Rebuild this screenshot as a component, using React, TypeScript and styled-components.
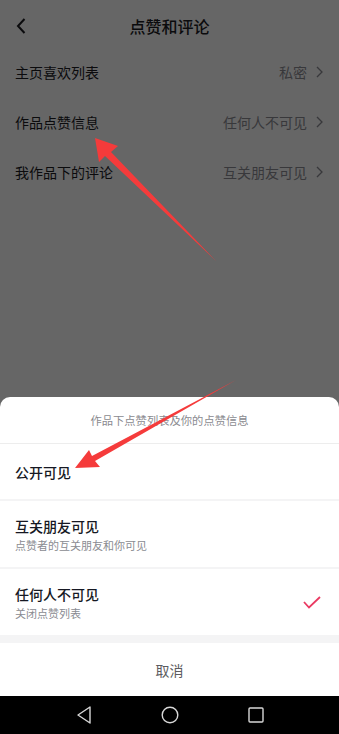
import styled, { createGlobalStyle } from 'styled-components';

const GlobalStyle = createGlobalStyle`
    html, body {
        margin: 0;
        padding: 0;
        background: #ffffff;
    }
    body {
        font-family: "Noto Sans CJK SC", "Noto Sans", sans-serif;
    }
`;

const Screen = styled.div`
    width: 339px;
    height: 734px;
    position: relative;
    display: flex;
    flex-direction: column;
    overflow: hidden;
    background: #666666;
`;

const Page = styled.div`
    flex: 1;
    display: flex;
    flex-direction: column;
    background: #666666;
`;

const Header = styled.div`
    height: 42px;
    padding-top: 5px;
    display: flex;
    align-items: center;
    justify-content: center;
    position: relative;
    font-size: 16px;
    font-weight: 500;
    color: #0b0b0d;
`;

const Back = styled.svg`
    position: absolute;
    left: 16px;
    top: 18px;
`;

const SettingRow = styled.div`
    height: 50px;
    display: flex;
    align-items: center;
    justify-content: space-between;
    padding: 0 16px 0 15px;
    font-size: 14px;
    color: #0b0b0d;
`;

const Value = styled.div`
    display: flex;
    align-items: center;
    gap: 9px;
    color: #38383b;
    font-size: 14px;
`;

const Sheet = styled.div`
    background: #ffffff;
    border-radius: 10px 10px 0 0;
    display: flex;
    flex-direction: column;
`;

const SheetTitle = styled.div`
    height: 46px;
    display: flex;
    align-items: center;
    justify-content: center;
    font-size: 11.3px;
    color: #8a8a8f;
    border-bottom: 1px solid #ededed;
`;

const Option = styled.div<{ $tall?: boolean }>`
    height: ${p => (p.$tall ? '66px' : '55px')};
    display: flex;
    align-items: center;
    justify-content: space-between;
    padding: 0 18px 0 15px;
`;

const Divider = styled.div<{ $thick?: boolean }>`
    height: ${p => (p.$thick ? '8px' : '2px')};
    background: #f4f4f5;
`;

const OptionText = styled.div`
    display: flex;
    flex-direction: column;
    gap: 1px;
`;

const OptionTitle = styled.div`
    font-size: 14px;
    font-weight: 500;
    color: #161823;
    line-height: 20px;
`;

const OptionSub = styled.div`
    font-size: 11px;
    color: #8a8b91;
    line-height: 16px;
`;

const Cancel = styled.div`
    height: 53px;
    display: flex;
    align-items: center;
    justify-content: center;
    font-size: 14px;
    color: #5c5c60;
`;

const NavBar = styled.div`
    height: 38px;
    background: #000000;
    display: flex;
    align-items: center;
    justify-content: center;
    gap: 69px;
`;

const Arrows = styled.svg`
    position: absolute;
    left: 0;
    top: 0;
    pointer-events: none;
`;

const Chevron = () => (
    <svg width="7" height="12" viewBox="0 0 7 12">
        <path d="M1 1l5 5-5 5" fill="none" stroke="#38383b" strokeWidth="1.3" />
    </svg>
);

const settings = [
    { label: '主页喜欢列表', value: '私密' },
    { label: '作品点赞信息', value: '任何人不可见' },
    { label: '我作品下的评论', value: '互关朋友可见' },
];

export default function App() {
    return (
        <Screen>
            <GlobalStyle />
            <Page>
                <Header>
                    <Back width="10" height="16" viewBox="0 0 10 16">
                        <path d="M8.5 1L2 8l6.5 7" fill="none" stroke="#0b0b0d" strokeWidth="2" />
                    </Back>
                    点赞和评论
                </Header>
                {settings.map(s => (
                    <SettingRow key={s.label}>
                        {s.label}
                        <Value>
                            {s.value}
                            <Chevron />
                        </Value>
                    </SettingRow>
                ))}
            </Page>
            <Sheet>
                <SheetTitle>作品下点赞列表及你的点赞信息</SheetTitle>
                <Option>
                    <OptionTitle>公开可见</OptionTitle>
                </Option>
                <Divider />
                <Option $tall>
                    <OptionText>
                        <OptionTitle>互关朋友可见</OptionTitle>
                        <OptionSub>点赞者的互关朋友和你可见</OptionSub>
                    </OptionText>
                </Option>
                <Divider />
                <Option $tall>
                    <OptionText>
                        <OptionTitle>任何人不可见</OptionTitle>
                        <OptionSub>关闭点赞列表</OptionSub>
                    </OptionText>
                    <svg width="18" height="13" viewBox="0 0 18 13">
                        <path d="M1 6l5 5.5L17 1" fill="none" stroke="#ea3a62" strokeWidth="1.8" />
                    </svg>
                </Option>
                <Divider $thick />
                <Cancel>取消</Cancel>
            </Sheet>
            <NavBar>
                <svg width="16" height="18" viewBox="0 0 16 18">
                    <path d="M14 1L2 9l12 8z" fill="none" stroke="#d8d8d8" strokeWidth="1.4" strokeLinejoin="round" />
                </svg>
                <svg width="18" height="18" viewBox="0 0 18 18">
                    <circle cx="9" cy="9" r="7.8" fill="none" stroke="#d8d8d8" strokeWidth="1.4" />
                </svg>
                <svg width="16" height="16" viewBox="0 0 16 16">
                    <rect x="1" y="1" width="14" height="14" rx="1" fill="none" stroke="#d8d8d8" strokeWidth="1.4" />
                </svg>
            </NavBar>
            <Arrows width="339" height="734" viewBox="0 0 339 734">
                <path d="M95 138 L118 146 L111 152 L216 261 L105 156 L99 162 Z" fill="#f53b3b" />
                <path d="M75 468 L89 450 L92 456 L236 380 L95 461 L100 467 Z" fill="#f53b3b" />
            </Arrows>
        </Screen>
    );
}
